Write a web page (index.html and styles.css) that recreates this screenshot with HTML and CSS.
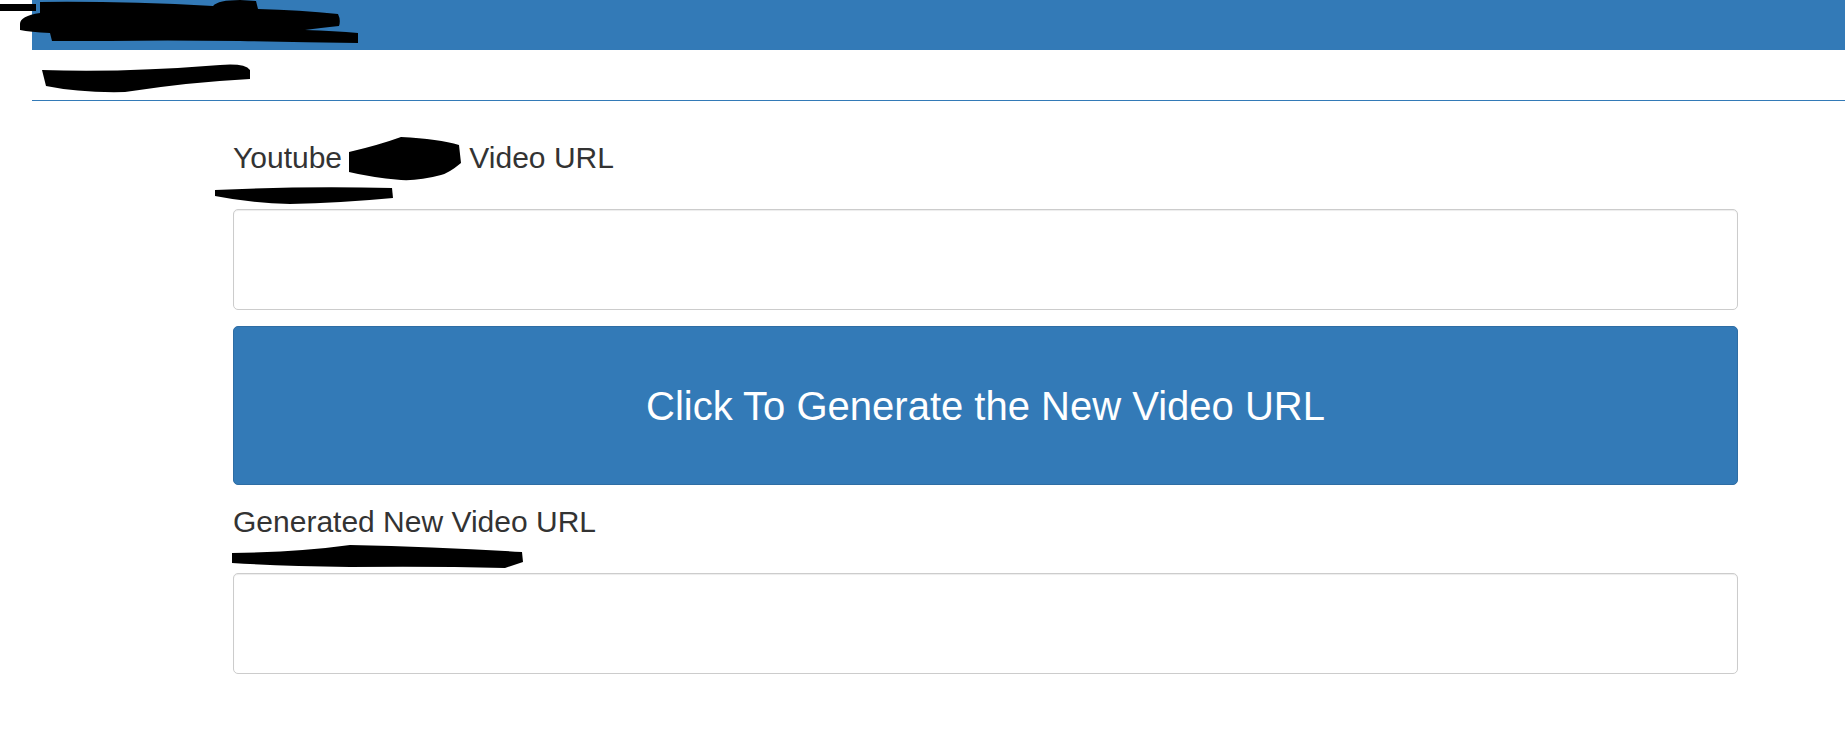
FILE: index.html
```html
<!DOCTYPE html>
<html lang="en">
<head>
<meta charset="utf-8">
<title>Video URL Generator</title>
<link rel="stylesheet" href="styles.css">
</head>
<body>
<div class="page">
  <header class="topbar">
    <svg class="mark-title" width="360" height="45" viewBox="0 0 360 45" aria-hidden="true">
      <path d="M0,4 L36,4 L36,11 L0,11 Z"/>
      <path d="M20,24 Q20,16 40,13 L40,2 Q120,1 213,6 Q218,0 240,0 L256,1 L258,9 Q300,10 338,14 Q341,20 339,26 Q320,28 305,30 Q335,31 358,33 L358,43 Q300,42 240,41 Q160,40 110,41 Q70,41 52,41 L50,33 Q30,32 20,30 Z"/>
    </svg>
  </header>
  <div class="subbar">
    <svg class="mark-sub" width="210" height="45" viewBox="0 0 210 45" aria-hidden="true">
      <path d="M0,20 Q78,23 178,15 Q203,13 208,20 L208,29 Q148,32 83,42 Q38,43 4,36 Z"/>
    </svg>
  </div>
  <main class="form">
    <label class="field-label" for="src">Youtube <span class="redact-inline"><svg width="114" height="44" viewBox="0 0 114 44" aria-hidden="true"><path d="M0,15 Q30,8 52,0 Q90,2 110,8 L112,26 Q100,36 92,38 Q70,44 52,43 Q20,40 0,35 Z"/></svg></span>Video URL</label>
    <div class="note">
      <svg class="mark-note1" width="180" height="33" viewBox="0 0 180 33" aria-hidden="true">
        <path d="M0,14 Q85,10 177,12 L178,22 Q125,27 75,28 Q35,27 0,20 Z"/>
      </svg>
    </div>
    <input class="field" id="src" type="text">
    <button class="btn" type="button">Click To Generate the New Video URL</button>
    <label class="field-label second" for="out">Generated New Video URL</label>
    <div class="note">
      <svg class="mark-note2" width="295" height="33" viewBox="0 0 295 33" aria-hidden="true">
        <path d="M1,13 Q69,12 119,5 Q209,7 291,12 L292,22 L274,28 Q199,26 119,27 Q49,26 1,23 Z"/>
      </svg>
    </div>
    <input class="field" id="out" type="text">
  </main>
</div>
</body>
</html>
```

FILE: styles.css
```css
html, body {
  margin: 0;
  padding: 0;
  background: #fff;
}

body {
  font-family: "Liberation Sans", Arial, Helvetica, sans-serif;
  color: #333;
}

.page {
  padding-left: 32px;
}

.topbar {
  height: 50px;
  background: #337ab7;
  display: flex;
  align-items: flex-start;
}

.topbar svg,
.subbar svg,
.note svg {
  display: block;
  fill: #000;
}

.mark-title {
  margin-left: -32px;
}

.subbar {
  height: 50px;
  border-bottom: 1px solid #337ab7;
  padding-left: 10px;
  box-sizing: content-box;
}

.form {
  padding: 39px 107px 40px 201px;
  display: flex;
  flex-direction: column;
}

.field-label {
  display: block;
  font-size: 30px;
  line-height: 36px;
  height: 36px;
  color: #333;
  white-space: nowrap;
}

.redact-inline {
  display: inline-block;
  position: relative;
  width: 119px;
  height: 0;
}

.redact-inline svg {
  position: absolute;
  left: -1px;
  bottom: -13px;
  display: block;
  fill: #000;
}

.field-label.second {
  margin-top: 19px;
}

.note {
  height: 33px;
}

.mark-note1 {
  margin-left: -18px;
}

.mark-note2 {
  margin-left: -2px;
}

.field {
  display: block;
  box-sizing: border-box;
  width: 100%;
  height: 101px;
  margin: 0;
  border: 1px solid #ccc;
  border-radius: 5px;
  background: #fff;
  font-family: inherit;
  font-size: 30px;
  padding: 0 24px;
  box-shadow: inset 0 1px 1px rgba(0, 0, 0, 0.075);
}

.btn {
  display: block;
  box-sizing: border-box;
  width: 100%;
  height: 159px;
  margin: 16px 0 0;
  border: 1px solid #2e6da4;
  border-radius: 5px;
  background: #337ab7;
  color: #fff;
  font-family: inherit;
  font-size: 40px;
  line-height: 1;
  padding: 0;
  cursor: pointer;
}
```
